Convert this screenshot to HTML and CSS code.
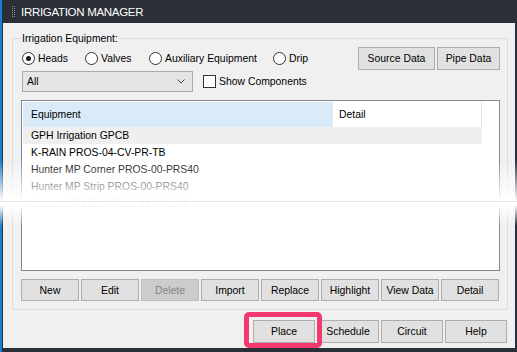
FILE: index.html
```html
<!DOCTYPE html>
<html lang="en">
  <head>
    <meta charset="UTF-8" />
    <title>Irrigation Manager</title>
    <link rel="stylesheet" href="styles.css">
  </head>
  <body>
    <div class="window">
      <div class="title-bar">
        <svg class="grip" width="4" height="11" viewBox="0 0 4 11">
          <rect x="0" y="0" width="1" height="1" />
          <rect x="2" y="0" width="1" height="1" />
          <rect x="0" y="2" width="1" height="1" />
          <rect x="2" y="2" width="1" height="1" />
          <rect x="0" y="4" width="1" height="1" />
          <rect x="2" y="4" width="1" height="1" />
          <rect x="0" y="6" width="1" height="1" />
          <rect x="2" y="6" width="1" height="1" />
          <rect x="0" y="8" width="1" height="1" />
          <rect x="2" y="8" width="1" height="1" />
          <rect x="0" y="10" width="1" height="1" />
          <rect x="2" y="10" width="1" height="1" />
        </svg>
        <span class="title">IRRIGATION MANAGER</span>
      </div>

      <div class="window-body">
        <div class="group">
          <span class="group-label">Irrigation Equipment:</span>

          <div class="top-row">
            <div class="radios">
              <label class="radio checked"><span class="radio-dot"></span>Heads</label>
              <label class="radio"><span class="radio-dot"></span>Valves</label>
              <label class="radio"><span class="radio-dot"></span>Auxiliary Equipment</label>
              <label class="radio"><span class="radio-dot"></span>Drip</label>
            </div>
            <div class="top-buttons">
              <button class="btn btn-source">Source Data</button>
              <button class="btn btn-pipe">Pipe Data</button>
            </div>
          </div>

          <div class="filter-row">
            <div class="select">
              <span>All</span>
              <svg width="8" height="5" viewBox="0 0 8 5">
                <path d="M0.5 0.5 L4 4 L7.5 0.5" fill="none" stroke="#444" stroke-width="1" />
              </svg>
            </div>
            <label class="check"><span class="check-box"></span>Show Components</label>
          </div>

          <div class="list">
            <div class="list-header">
              <div class="col col-equipment">Equipment</div>
              <div class="col col-detail">Detail</div>
            </div>
            <div class="list-row selected">GPH Irrigation GPCB</div>
            <div class="list-row">K-RAIN PROS-04-CV-PR-TB</div>
            <div class="list-row">Hunter MP Corner PROS-00-PRS40</div>
            <div class="list-row">Hunter MP Strip PROS-00-PRS40</div>
            <div class="list-row">Hunter MP1000 PROS-00-PRS40</div>
          </div>

          <div class="action-row">
            <button class="btn">New</button>
            <button class="btn">Edit</button>
            <button class="btn" disabled>Delete</button>
            <button class="btn">Import</button>
            <button class="btn">Replace</button>
            <button class="btn">Highlight</button>
            <button class="btn">View Data</button>
            <button class="btn">Detail</button>
          </div>
        </div>

        <div class="footer-row">
          <span class="highlight"><button class="btn">Place</button></span>
          <button class="btn">Schedule</button>
          <button class="btn">Circuit</button>
          <button class="btn">Help</button>
        </div>
      </div>

      <!-- screenshot cut: content fades out and back in -->
      <div class="tear"></div>
    </div>
  </body>
</html>
```

FILE: styles.css
```css
:root {
  --frame-color: #2b2f38;
  --frame-accent: #1a7fd4;
  --panel-color: #f0f0f0;
  --button-color: #e1e1e1;
  --button-border: #adadad;
  --group-border: #dcdcdc;
  --list-border: #828790;
  --header-blue: #d9ebf9;
  --highlight-pink: #f23a6e;
}

* {
  margin: 0;
  padding: 0;
  box-sizing: border-box;
}

body {
  width: 517px;
  height: 352px;
  overflow: hidden;
  background-color: var(--frame-color);
  font-family: "Liberation Sans", Arial, sans-serif;
  font-size: 10.4px;
  color: #000;
}

.window {
  position: relative;
  height: 352px;
  display: flex;
  flex-direction: column;
  background-color: var(--frame-color);
  border-left: 2px solid var(--frame-accent);
  padding: 0 2px 4px 1px;
}

.title-bar {
  height: 23px;
  flex-shrink: 0;
  display: flex;
  align-items: center;
  gap: 5px;
  padding-left: 9px;
  color: #fff;
}

.grip {
  fill: #8e9197;
}

.title {
  font-size: 11.5px;
  letter-spacing: -0.3px;
}

.window-body {
  flex: 1;
  display: flex;
  flex-direction: column;
  background-color: var(--panel-color);
  padding: 15px 7px 0 9px;
}

.group {
  position: relative;
  border: 1px solid var(--group-border);
  padding: 8px 7px 8px 8px;
}

.group-label {
  position: absolute;
  top: -7px;
  left: 8px;
  padding: 0 1px;
  line-height: 13px;
  background-color: var(--panel-color);
}

.top-row {
  height: 23px;
  display: flex;
  align-items: center;
  justify-content: space-between;
}

.radios {
  display: grid;
  grid-template-columns: 63px 64px 124px auto;
  margin-left: 1px;
}

.radio {
  display: flex;
  align-items: center;
  gap: 3px;
}

.radio-dot {
  width: 13px;
  height: 13px;
  border: 1px solid #333;
  border-radius: 50%;
  background-color: #fff;
  display: grid;
  place-items: center;
}

.radio.checked .radio-dot::after {
  content: "";
  width: 5px;
  height: 5px;
  border-radius: 50%;
  background-color: #1a1a1a;
}

.top-buttons {
  display: flex;
  gap: 2px;
}

.btn {
  font: inherit;
  color: #000;
  background-color: var(--button-color);
  border: 1px solid var(--button-border);
  height: 23px;
}

.btn-source {
  width: 77px;
}

.btn-pipe {
  width: 63px;
}

.btn:disabled {
  background-color: #cccccc;
  border-color: #bfbfbf;
  color: #858585;
}

.filter-row {
  height: 21px;
  margin-top: 1px;
  margin-left: 1px;
  display: flex;
  align-items: center;
}

.select {
  width: 171px;
  height: 21px;
  display: flex;
  align-items: center;
  justify-content: space-between;
  padding: 0 7px 0 4px;
  background-color: #e5e5e5;
  border: 1px solid #acacac;
}

.check {
  margin-left: 10px;
  display: flex;
  align-items: center;
  gap: 3px;
}

.check-box {
  width: 13px;
  height: 13px;
  border: 1px solid #333;
  background-color: #fff;
}

.list {
  height: 171px;
  margin-top: 8px;
  padding: 1px 0 0 1px;
  background-color: #fff;
  border: 1px solid var(--list-border);
}

.list-header {
  height: 25px;
  display: flex;
}

.col {
  display: flex;
  align-items: center;
}

.col-equipment {
  width: 310px;
  padding-left: 8px;
  background-color: var(--header-blue);
}

.col-detail {
  width: 149px;
  padding-left: 6px;
  border-right: 1px solid #e5e5e5;
}

.list-row {
  width: 459px;
  height: 17px;
  padding-left: 8px;
  display: flex;
  align-items: center;
}

.list-row.selected {
  background-color: #efefef;
}

.action-row {
  margin-top: 8px;
  display: flex;
  gap: 2px;
}

.action-row .btn {
  width: 58px;
  height: 22px;
}

.footer-row {
  margin-top: 10px;
  padding-right: 1px;
  display: flex;
  justify-content: flex-end;
  gap: 2px;
}

.footer-row .btn {
  width: 62px;
  height: 23px;
}

.highlight {
  position: relative;
  display: flex;
}

.highlight::after {
  content: "";
  position: absolute;
  top: -8px;
  left: -9px;
  right: -7px;
  bottom: -5px;
  border: 5px solid var(--highlight-pink);
  border-radius: 5px;
}

.tear {
  position: absolute;
  left: -2px;
  right: 0;
  top: 160px;
  height: 66px;
  background: linear-gradient(
    rgba(255, 255, 255, 0) 0,
    #fff 41px,
    #e6e6e6 41px,
    #e6e6e6 42px,
    #fff 42px,
    #fff 45px,
    rgba(255, 255, 255, 0) 66px
  );
}
```
